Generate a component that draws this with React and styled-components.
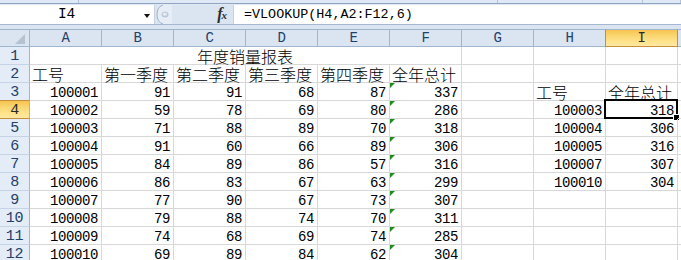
import React from "react";
import styled, { createGlobalStyle, css } from "styled-components";

const GlobalStyle = createGlobalStyle`
  html, body { margin: 0; padding: 0; background: #ffffff; }
  #root { width: 681px; height: 260px; overflow: hidden; }
`;

const MONO = `"Liberation Mono", "DejaVu Sans Mono", monospace`;
const CJK = `"Noto Sans CJK SC", "Noto Sans CJK JP", sans-serif`;

const Window = styled.div`
  width: 681px;
  height: 260px;
  overflow: hidden;
  background: #dbe5f1;
  display: flex;
  flex-direction: column;
`;

const TopStrip = styled.div`
  height: 3px;
  display: flex;
  background: #dfe9f5;
  border-bottom: 1px solid #8fa5c2;
  flex: none;
`;

const StripSeg = styled.div`
  width: ${(p) => p.$w}px;
  flex: ${(p) => (p.$w ? "none" : "1")};
  border-right: 1px solid #b3c4da;
  box-sizing: border-box;
`;

const FormulaBar = styled.div`
  height: 21px;
  display: flex;
  flex: none;
  box-sizing: border-box;
  border-top: 1px solid #dfe8f3;
  border-bottom: 1px solid #a6b8cf;
`;

const NameBox = styled.div`
  width: 155px;
  flex: none;
  background: #ffffff;
  display: flex;
  align-items: center;
  position: relative;
  box-sizing: border-box;
  border-right: 1px solid #c5d2e2;
`;

const NameText = styled.span`
  flex: 1;
  text-align: center;
  padding-right: 21px;
  font-family: ${MONO};
  font-size: 14.5px;
  letter-spacing: -0.2px;
  color: #000;
  line-height: 19px;
`;

const DropArrow = styled.span`
  position: absolute;
  left: 144px;
  top: 9px;
  width: 0;
  height: 0;
  border-left: 3.5px solid transparent;
  border-right: 3.5px solid transparent;
  border-top: 4px solid #111;
`;

const Controls = styled.div`
  width: 78px;
  flex: none;
  display: flex;
  align-items: center;
  justify-content: space-between;
  padding-right: 7px;
  box-sizing: border-box;
  background: #dbe5f1;
`;

const Grip = styled.svg`
  display: block;
  margin-left: 1px;
`;

const Fx = styled.span`
  font-family: "Liberation Serif", "DejaVu Serif", serif;
  font-style: italic;
  font-weight: bold;
  font-size: 16px;
  color: #2e2e2e;
  line-height: 19px;
  letter-spacing: -1px;
  & sub {
    font-size: 11px;
    vertical-align: 0;
  }
`;

const FormulaInput = styled.div`
  flex: 1;
  background: #ffffff;
  border-left: 1px solid #c5d2e2;
  padding-left: 10px;
  font-family: ${MONO};
  font-size: 13.4px;
  line-height: 19px;
  color: #000;
  white-space: nowrap;
`;

const Spacer = styled.div`
  height: 4px;
  flex: none;
  background: #dbe5f1;
`;

const Sheet = styled.div`
  display: grid;
  grid-template-columns: 30px repeat(9, 72px) 1fr;
  grid-auto-rows: 18px;
  grid-template-rows: 18px;
  background: #fff;
  position: relative;
`;

const headerBase = css`
  box-sizing: border-box;
  font-family: ${MONO};
  font-size: 14px;
  letter-spacing: -0.3px;
  color: #23406a;
  display: flex;
  align-items: center;
  justify-content: center;
  line-height: 17px;
`;

const activeHeader = css`
  background: linear-gradient(#f7c24f 0%, #f9d46c 30%, #ffe28a 70%, #ffe9a3 100%);
  color: #2a2a2a;
`;

const Corner = styled.div`
  ${headerBase};
  background: #dbe5f1;
  border-top: 1px solid #9eb6ce;
  border-right: 1px solid #9eb6ce;
  border-bottom: 1px solid #9eb6ce;
  position: relative;
`;

const CornerTri = styled.svg`
  position: absolute;
  right: 4px;
  bottom: 2px;
`;

const ColHeader = styled.div`
  ${headerBase};
  background: #dbe5f1;
  border-top: 1px solid #9eb6ce;
  border-right: 1px solid ${(p) => (p.$active ? "#c4903a" : "#9eb6ce")};
  border-bottom: 1px solid ${(p) => (p.$active ? "#c4903a" : "#9eb6ce")};
  ${(p) => p.$active && activeHeader};
  ${(p) => p.$active && css`border-left: 1px solid #c4903a; margin-left: -1px;`}
`;

const RowHeader = styled.div`
  ${headerBase};
  font-size: 15px;
  background: #e4ecf7;
  border-right: 1px solid #9eb6ce;
  border-bottom: 1px solid ${(p) => (p.$active ? "#c4903a" : "#c5d3e4")};
  ${(p) => p.$active && activeHeader};
  ${(p) => p.$active && css`border-top: 1px solid #c4903a; margin-top: -1px;`}
  padding-top: 1px;
`;

const Cell = styled.div`
  box-sizing: border-box;
  border-right: 1px solid #d8d8d8;
  border-bottom: 1px solid #d8d8d8;
  position: relative;
  white-space: nowrap;
  color: #000;
  grid-column: ${(p) => (p.$span ? `span ${p.$span}` : "auto")};
  text-align: ${(p) => p.$align || "left"};
  padding: 0 3px 0 2px;
  ${(p) =>
    p.$num
      ? css`
          font-family: ${MONO};
          font-size: 14px;
          letter-spacing: -0.4px;
          line-height: 21px;
        `
      : css`
          font-family: ${CJK};
          font-size: 16px;
          font-weight: 300;
          line-height: 16px;
          padding-top: 1px;
        `}
`;

const ErrTri = styled.span`
  position: absolute;
  left: 0;
  top: 0;
  width: 0;
  height: 0;
  border-top: 5px solid #1e8c1e;
  border-right: 5px solid transparent;
`;

const Selection = styled.div`
  position: absolute;
  left: -2px;
  top: -2px;
  right: -1px;
  bottom: -1px;
  border: 2px solid #000;
  pointer-events: none;
`;

const Handle = styled.span`
  position: absolute;
  right: -4px;
  bottom: -4px;
  width: 5px;
  height: 5px;
  background: #000;
  border: 1px solid #fff;
`;

const COLS = ["A", "B", "C", "D", "E", "F", "G", "H", "I"];

const DATA = [
  [100001, 91, 91, 68, 87, 337],
  [100002, 59, 78, 69, 80, 286],
  [100003, 71, 88, 89, 70, 318],
  [100004, 91, 60, 66, 89, 306],
  [100005, 84, 89, 86, 57, 316],
  [100006, 86, 83, 67, 63, 299],
  [100007, 77, 90, 67, 73, 307],
  [100008, 79, 88, 74, 70, 311],
  [100009, 74, 68, 69, 74, 285],
  [100010, 69, 89, 84, 62, 304],
];

const LOOKUP = [
  [100003, 318],
  [100004, 306],
  [100005, 316],
  [100007, 307],
  [100010, 304],
];

function Empty() {
  return <Cell />;
}

export default function App() {
  const rows = [];
  rows.push(
    <React.Fragment key="r1">
      <RowHeader>1</RowHeader>
      <Cell $span={6} $align="center">年度销量报表</Cell>
      <Empty />
      <Empty />
      <Empty />
      <Cell />
    </React.Fragment>
  );
  const heads = ["工号", "第一季度", "第二季度", "第三季度", "第四季度", "全年总计"];
  rows.push(
    <React.Fragment key="r2">
      <RowHeader>2</RowHeader>
      {heads.map((h) => (
        <Cell key={h}>{h}</Cell>
      ))}
      <Empty />
      <Empty />
      <Empty />
      <Cell />
    </React.Fragment>
  );
  DATA.forEach((r, i) => {
    const rowNo = i + 3;
    let h = null;
    let iv = null;
    if (rowNo === 3) {
      h = <Cell>工号</Cell>;
      iv = <Cell>全年总计</Cell>;
    } else if (rowNo <= 8) {
      const l = LOOKUP[rowNo - 4];
      h = (
        <Cell $num $align="right">
          {l[0]}
        </Cell>
      );
      iv = (
        <Cell $num $align="right">
          {l[1]}
          {rowNo === 4 && (
            <Selection>
              <Handle />
            </Selection>
          )}
        </Cell>
      );
    } else {
      h = <Cell />;
      iv = <Cell />;
    }
    rows.push(
      <React.Fragment key={"r" + rowNo}>
        <RowHeader $active={rowNo === 4}>{rowNo}</RowHeader>
        {r.map((v, j) => (
          <Cell key={j} $num $align="right">
            {j === 5 && <ErrTri />}
            {v}
          </Cell>
        ))}
        <Empty />
        {h}
        {iv}
        <Cell />
      </React.Fragment>
    );
  });

  return (
    <Window>
      <GlobalStyle />
      <TopStrip>
        <StripSeg $w={79} />
        <StripSeg $w={419} />
        <StripSeg $w={145} />
        <StripSeg />
      </TopStrip>
      <FormulaBar>
        <NameBox>
          <NameText>I4</NameText>
          <DropArrow />
        </NameBox>
        <Controls>
          <Grip width="16" height="19" viewBox="0 0 16 19">
            <defs>
              <radialGradient id="gb" cx="0.45" cy="0.4" r="0.6">
                <stop offset="0" stopColor="#f4f7fb" />
                <stop offset="1" stopColor="#b7c6d8" />
              </radialGradient>
            </defs>
            <path d="M7 0 Q1 2 1 9.5 Q1 17 7 19 L16 19 L16 0 Z" fill="#e6edf6" />
            <path d="M7 0 Q1 2 1 9.5 Q1 17 7 19" fill="none" stroke="#9fb2c9" strokeWidth="1" />
            <ellipse cx="9" cy="9.5" rx="3.2" ry="2.6" fill="url(#gb)" stroke="#a9bbd0" strokeWidth="0.6" />
          </Grip>
          <Fx>
            f<sub>x</sub>
          </Fx>
        </Controls>
        <FormulaInput>=VLOOKUP(H4,A2:F12,6)</FormulaInput>
      </FormulaBar>
      <Spacer />
      <Sheet>
        <Corner>
          <CornerTri width="10" height="10" viewBox="0 0 10 10">
            <polygon points="10,0 10,10 0,10" fill="#b4c2d2" />
          </CornerTri>
        </Corner>
        {COLS.map((c) => (
          <ColHeader key={c} $active={c === "I"}>
            {c}
          </ColHeader>
        ))}
        <ColHeader />
        {rows}
      </Sheet>
    </Window>
  );
}
